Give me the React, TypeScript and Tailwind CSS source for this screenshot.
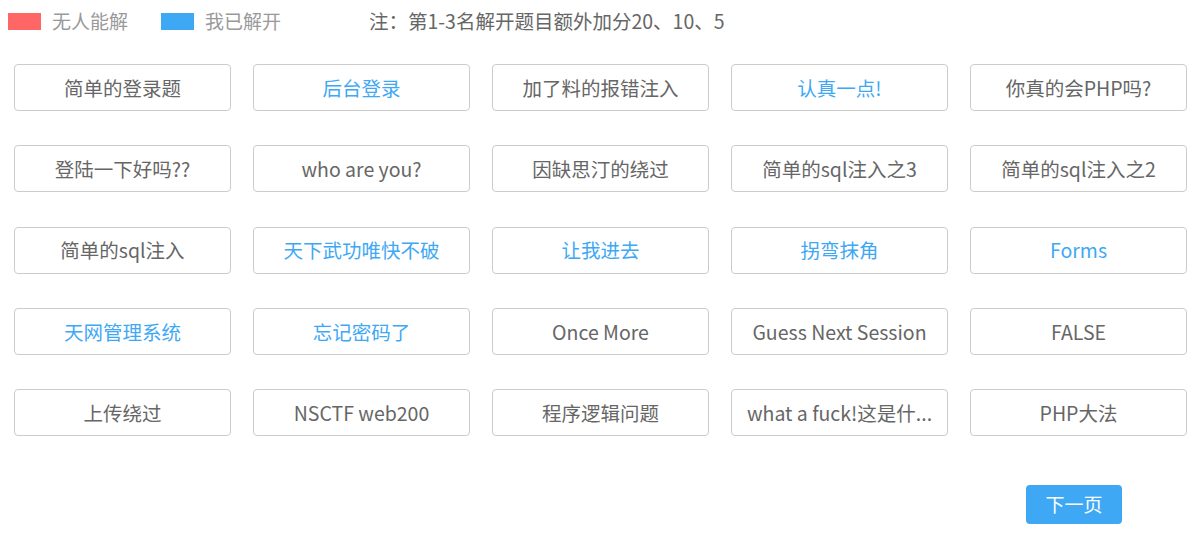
import React from "react";

type Item = { t: string; s?: boolean };

const items: Item[] = [
  { t: "简单的登录题" },
  { t: "后台登录", s: true },
  { t: "加了料的报错注入" },
  { t: "认真一点!", s: true },
  { t: "你真的会PHP吗?" },
  { t: "登陆一下好吗??" },
  { t: "who are you?" },
  { t: "因缺思汀的绕过" },
  { t: "简单的sql注入之3" },
  { t: "简单的sql注入之2" },
  { t: "简单的sql注入" },
  { t: "天下武功唯快不破", s: true },
  { t: "让我进去", s: true },
  { t: "拐弯抹角", s: true },
  { t: "Forms", s: true },
  { t: "天网管理系统", s: true },
  { t: "忘记密码了", s: true },
  { t: "Once More" },
  { t: "Guess Next Session" },
  { t: "FALSE" },
  { t: "上传绕过" },
  { t: "NSCTF web200" },
  { t: "程序逻辑问题" },
  { t: "what a fuck!这是什..." },
  { t: "PHP大法" },
];

export default function App() {
  return (
    <div
      className="w-[1204px] h-[535px] bg-white overflow-hidden"
      style={{ fontFamily: '"Noto Sans CJK SC", "Noto Sans", sans-serif' }}
    >
      <div className="flex items-center h-[42px] pl-[8px] text-[19px]">
        <div className="flex items-center">
          <span className="w-[33px] h-[17px] bg-[#ff6666]" />
          <span className="ml-[11px] text-[#999999]">无人能解</span>
        </div>
        <div className="flex items-center ml-[33px]">
          <span className="w-[33px] h-[17px] bg-[#3ea8f5]" />
          <span className="ml-[11px] text-[#999999]">我已解开</span>
        </div>
        <span className="ml-[88px] text-[#666666] text-[19.5px]">注：第1-3名解开题目额外加分20、10、5</span>
      </div>
      <div className="grid grid-cols-[repeat(5,217px)] gap-x-[22px] gap-y-[34.25px] pl-[14px] pt-[22px]">
        {items.map((it, i) => (
          <div
            key={i}
            className={
              "h-[47px] flex items-center justify-center px-[10px] border border-[#cccccc] rounded-[4px] text-[19.5px] whitespace-nowrap " +
              (it.s ? "text-[#3ea8f5]" : "text-[#666666]")
            }
          >
            <span>{it.t}</span>
          </div>
        ))}
      </div>
      <div className="flex justify-end pr-[82px] pt-[49px]">
        <button className="w-[96px] h-[39px] rounded-[4px] bg-[#3ea8f5] text-white text-[19px]">下一页</button>
      </div>
    </div>
  );
}
